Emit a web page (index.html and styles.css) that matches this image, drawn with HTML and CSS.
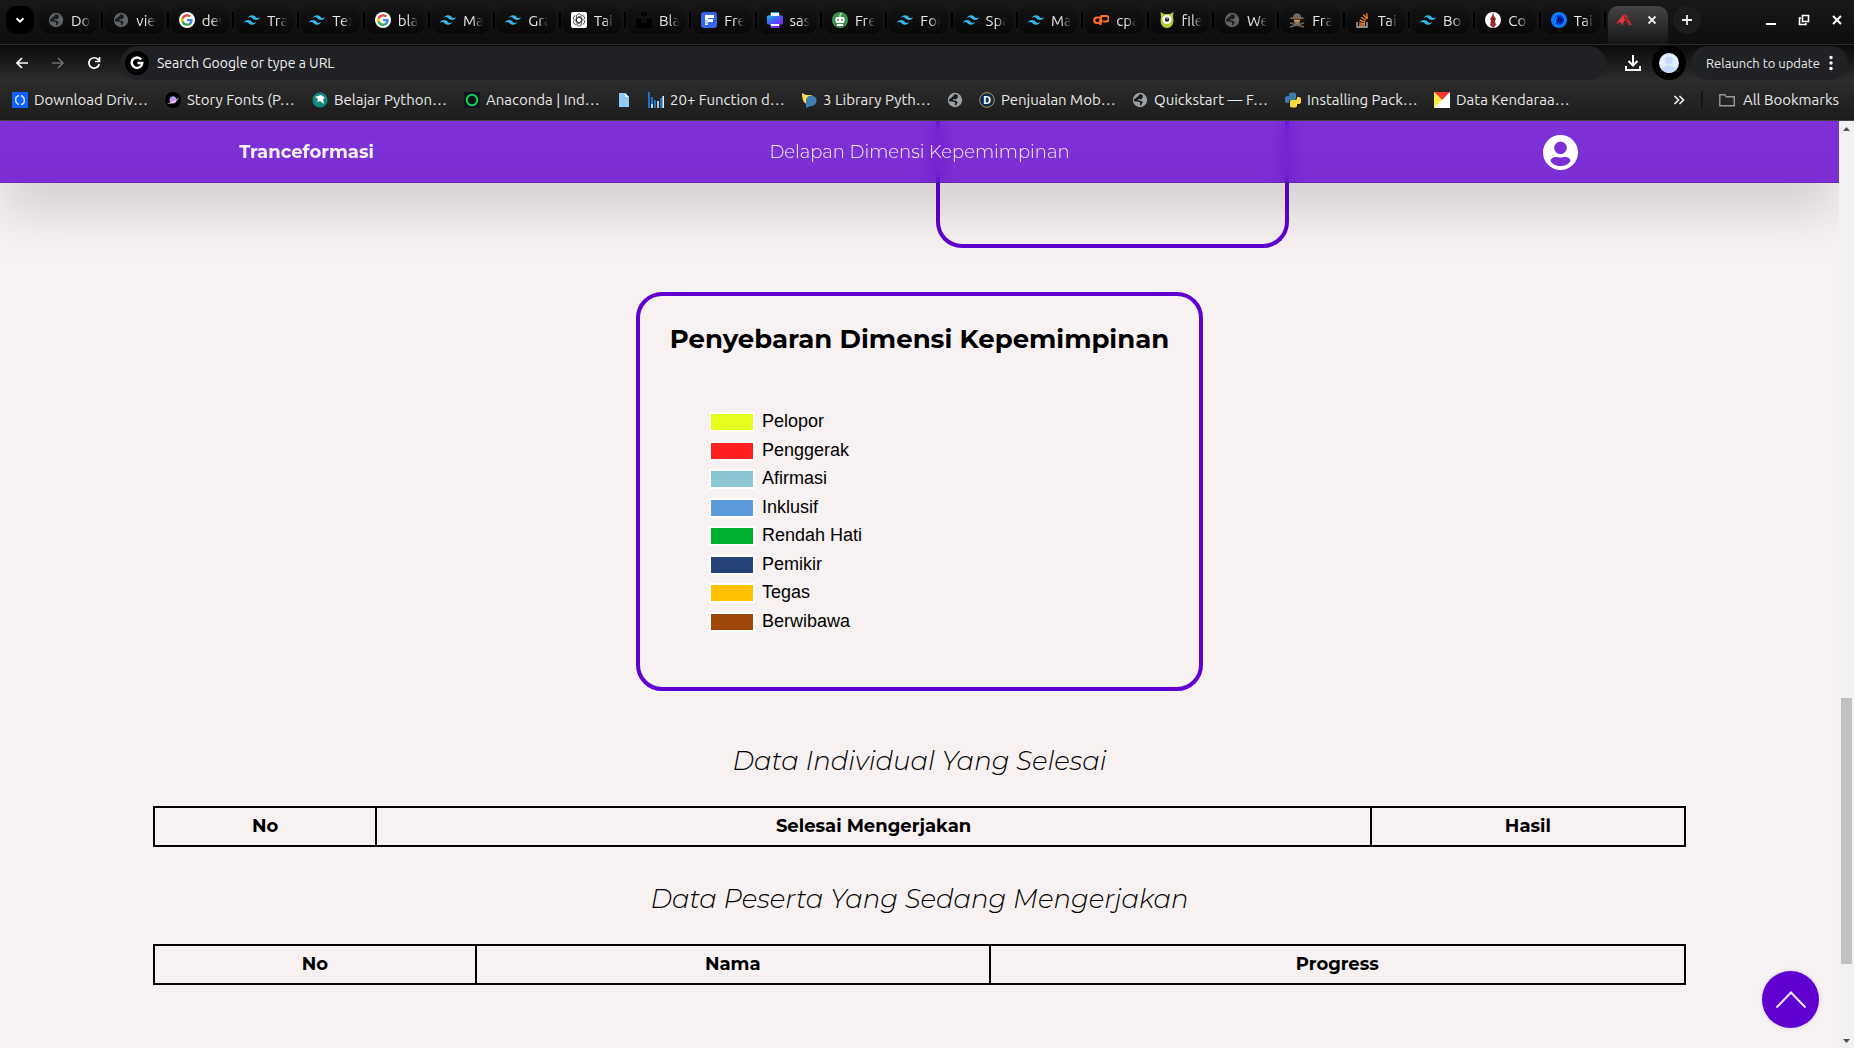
FILE: index.html
```html
<!DOCTYPE html>
<html lang="id">
<head>
<meta charset="utf-8">
<title>Delapan Dimensi Kepemimpinan</title>
<link rel="stylesheet" href="styles.css">
</head>
<body>
<svg class="sprite" aria-hidden="true">
  <symbol id="tailwind" viewBox="0 0 24 24"><path fill="#38b6e8" d="M12 4.800c-3.200 0-5.200 1.600-6 4.800 1.200-1.600 2.600-2.200 4.200-1.800.913.228 1.565.89 2.288 1.624C13.666 10.618 15.027 12 18 12c3.200 0 5.200-1.600 6-4.800-1.200 1.600-2.600 2.200-4.200 1.800-.913-.228-1.565-.89-2.288-1.624C16.337 6.182 14.976 4.800 12 4.800zM6 12c-3.200 0-5.200 1.600-6 4.800 1.200-1.600 2.600-2.200 4.200-1.800.913.228 1.565.89 2.288 1.624 1.177 1.194 2.538 2.576 5.512 2.576 3.200 0 5.200-1.600 6-4.800-1.200 1.600-2.600 2.200-4.200 1.800-.913-.228-1.565-.89-2.288-1.624C10.337 13.382 8.976 12 6 12z"/></symbol>
  <symbol id="globe" viewBox="0 0 16 16"><circle cx="8" cy="8" r="7.200" fill="currentColor"/><path fill="#1b1b1b" d="M7.500 2.200c-1.500.8-.2 2-1.800 2.400C4.200 5 4.500 6.500 3 6.800c-.7.200-1 .8-1.100 1.600.8 2 2.300.6 3.500 1.200 1 .5 1.800.2 2.600 1.100.6.800-.4 1.600-.2 2.600l1 .2c1-.8.700-2 2-2.700-.6-1.200-1-2-2.600-2-.8 0-1.400-.5-2.200-.7 0-1 .8-1.200 1.700-1.100.5.600 1.200.8 1.600.1.300-.6.500-1.100 1.300-1.200.7-.8-.3-1.600.3-2.600-1-.7-2.200-1.100-3.400-1.100z"/></symbol>
  <symbol id="google" viewBox="0 0 24 24"><circle cx="12" cy="12" r="12" fill="#fff"/><g transform="translate(2.400 2.400) scale(.8)"><path fill="#4285f4" d="M22.560 12.250c0-.78-.07-1.530-.2-2.250H12v4.260h5.920c-.26 1.370-1.040 2.530-2.210 3.310v2.770h3.570c2.080-1.920 3.280-4.740 3.280-8.090z"/><path fill="#34a853" d="M12 23c2.970 0 5.460-.98 7.280-2.660l-3.570-2.770c-.98.66-2.230 1.060-3.710 1.060-2.860 0-5.290-1.930-6.160-4.530H2.180v2.840C3.990 20.530 7.700 23 12 23z"/><path fill="#fbbc05" d="M5.840 14.090c-.22-.66-.35-1.360-.35-2.090s.13-1.430.35-2.090V7.070H2.180C1.430 8.550 1 10.220 1 12s.43 3.450 1.180 4.930l3.660-2.840z"/><path fill="#ea4335" d="M12 5.380c1.620 0 3.060.56 4.210 1.640l3.150-3.150C17.450 2.090 14.970 1 12 1 7.700 1 3.990 3.470 2.180 7.070l3.660 2.840c.87-2.600 3.300-4.530 6.160-4.530z"/></g></symbol>
</svg>

<header class="browser">
  <div class="tabstrip">
    <button class="tab-search" aria-label="Search tabs"><svg viewBox="0 0 16 16"><path d="M4.500 6.200 8 9.700l3.500-3.500" fill="none" stroke="#fff" stroke-width="2"/></svg></button>
    <div class="tabs">
      <button class="tab"><svg class="fav dim"><use href="#globe"/></svg><span>Do</span></button>
      <button class="tab"><svg class="fav dim"><use href="#globe"/></svg><span>vie</span></button>
      <button class="tab"><svg class="fav"><use href="#google"/></svg><span>dev</span></button>
      <button class="tab"><svg class="fav"><use href="#tailwind"/></svg><span>Tra</span></button>
      <button class="tab"><svg class="fav"><use href="#tailwind"/></svg><span>Tex</span></button>
      <button class="tab"><svg class="fav"><use href="#google"/></svg><span>bla</span></button>
      <button class="tab"><svg class="fav"><use href="#tailwind"/></svg><span>Ma</span></button>
      <button class="tab"><svg class="fav"><use href="#tailwind"/></svg><span>Gra</span></button>
      <button class="tab"><svg class="fav" viewBox="0 0 16 16"><rect width="16" height="16" rx="2" fill="#fff"/><g fill="none" stroke="#333" stroke-width=".8"><path id="petal" d="M8 5.200 5.500 6.600v4.200M5.500 6.600V4.200A2.400 2.400 0 0 1 9.800 2.800"/><use href="#petal" transform="rotate(60 8 8)"/><use href="#petal" transform="rotate(120 8 8)"/><use href="#petal" transform="rotate(180 8 8)"/><use href="#petal" transform="rotate(240 8 8)"/><use href="#petal" transform="rotate(300 8 8)"/></g></svg><span>Tai</span></button>
      <button class="tab"><svg class="fav" viewBox="0 0 16 16"><path d="M5 0h6v4H5zM0 7h5v4h6V7h5v9H0z" fill="#000"/></svg><span>Bla</span></button>
      <button class="tab"><svg class="fav" viewBox="0 0 16 16"><rect width="16" height="16" rx="3" fill="#3467e8"/><path d="M4 3h9v3H7v1h5v3H7v3H4z" fill="#fff"/><path d="M4 9h3M4 11h3" stroke="#3467e8" stroke-width=".6"/></svg><span>Fre</span></button>
      <button class="tab"><svg class="fav" viewBox="0 0 16 16"><defs><linearGradient id="pr" x1="0" y1="0" x2=".6" y2="1"><stop offset="0" stop-color="#0ff0d0"/><stop offset=".5" stop-color="#3a6bf0"/><stop offset="1" stop-color="#8a1cf0"/></linearGradient></defs><path d="M4 0h8l1 3 3 1v8l-3 1-1 3H4l-1-3-3-1V4l3-1z" fill="url(#pr)"/><path d="M4 1h8v3H4zM4 12h8v2H4z" fill="#fff"/></svg><span>sas</span></button>
      <button class="tab"><svg class="fav" viewBox="0 0 16 16"><circle cx="8" cy="8" r="8" fill="#3e9450"/><path d="M8 5V2.500L10 1" stroke="#fff" fill="none"/><rect x="3.500" y="5" width="9" height="6" rx="2" fill="#fff"/><path d="M5 12h6v2H5z" fill="#fff"/><circle cx="6" cy="8" r="1" fill="#3e9450"/><circle cx="10" cy="8" r="1" fill="#3e9450"/></svg><span>Fre</span></button>
      <button class="tab"><svg class="fav"><use href="#tailwind"/></svg><span>For</span></button>
      <button class="tab"><svg class="fav"><use href="#tailwind"/></svg><span>Spa</span></button>
      <button class="tab"><svg class="fav"><use href="#tailwind"/></svg><span>Ma</span></button>
      <button class="tab"><svg class="fav" viewBox="0 0 16 16"><path d="M7 5.500H4a2.700 2.700 0 0 0 0 5.500h2.500L8.500 4H13a2.700 2.700 0 0 1 0 5.500h-3M8.800 7.500 7.200 13" fill="none" stroke="#ff6c2c" stroke-width="2.200"/></svg><span>cpa</span></button>
      <button class="tab"><svg class="fav" viewBox="0 0 16 16"><path d="M1.500 0l3.500 2h6l3.500-2-.5 5c1.500 6-1 11-6 11S.5 11 2 5z" fill="#b5cc3a"/><circle cx="8" cy="7.500" r="4.500" fill="#fff"/><circle cx="8" cy="7.500" r="2.200" fill="#222"/><circle cx="8" cy="6.500" r=".7" fill="#fff"/></svg><span>file</span></button>
      <button class="tab"><svg class="fav dim"><use href="#globe"/></svg><span>We</span></button>
      <button class="tab"><svg class="fav" viewBox="0 0 16 16"><path d="M4 5c0-5 8-5 8 0l4 1c-3 2-13 2-16 0z" fill="#75655a"/><path d="M5 8h6v3l-2 1H7l-2-1z" fill="#8b7464"/><path d="M5 8h6v1H9l-1 1-1-1H5z" fill="#ff9d1e"/><path d="M1 11l14 4M15 11 1 15" stroke="#75655a" stroke-width="1.500"/></svg><span>Fra</span></button>
      <button class="tab"><svg class="fav" viewBox="0 0 16 16"><path d="M2 10v5h10v-5" fill="none" stroke="#bcbbbb" stroke-width="1.300"/><path d="M4 13h6M4 10.800l6 .7M4.600 8.200l5.600 1.700M6 5.200l5 3M8.300 2.500l3.700 4.500M11.500 1l1 5.600" stroke="#f48024" stroke-width="1.300"/></svg><span>Tai</span></button>
      <button class="tab"><svg class="fav"><use href="#tailwind"/></svg><span>Bo</span></button>
      <button class="tab"><svg class="fav" viewBox="0 0 16 16"><circle cx="8" cy="8" r="8" fill="#fff"/><path d="M8 0l1 4 2 3-1 2 1 4-3 3-3-3 1-4-1-2 2-3z" fill="#a32b2d"/><path d="M7 6l2 1-2 2 2 2" stroke="#612" fill="none"/></svg><span>Co</span></button>
      <button class="tab"><svg class="fav" viewBox="0 0 16 16"><circle cx="8" cy="8" r="8" fill="#0b7dff"/><circle cx="8" cy="8" r="5" fill="#0a37d8"/><path d="M7 4l6 4-5 4 1-3-3 2z" fill="#051a80"/><path d="M5 11a4 4 0 0 1 1-6" stroke="#24b5ff" fill="none"/></svg><span>Tai</span></button>
    </div>
    <button class="tab-active" aria-label="Close tab">
      <svg class="fav" viewBox="0 0 16 16"><path d="M0 12 6.500 3.500 10 2 7.500 6.500 10 7.500 8 9 6.500 13.500 4.500 10z" fill="#f0323c"/><path d="M7 3.500 10.500 2l2 4-2 1.500-2-2zM9.500 8.500 12.500 7l3.500 6-3 .5z" fill="#b02830"/></svg>
      <svg class="close" viewBox="0 0 10 10"><path d="m1.500 1.500 7 7m0-7-7 7" stroke="#eee" stroke-width="1.800"/></svg>
    </button>
    <button class="tab-new" aria-label="New tab"><svg viewBox="0 0 12 12"><path d="M6 1v10M1 6h10" stroke="#eee" stroke-width="1.800"/></svg></button>
    <div class="window-buttons">
      <button aria-label="Minimize"><svg viewBox="0 0 12 12"><path d="M1 10h10" stroke="#fff" stroke-width="2"/></svg></button>
      <button aria-label="Restore"><svg viewBox="0 0 12 12"><path d="M4.500 1.500h6v6h-6zM3 4H1.500v6.500H8V9" fill="none" stroke="#fff" stroke-width="1.600"/></svg></button>
      <button aria-label="Close window"><svg viewBox="0 0 12 12"><path d="m2 2 8 8m0-8-8 8" stroke="#fff" stroke-width="2"/></svg></button>
    </div>
  </div>

  <div class="toolbar">
    <div class="history">
      <button aria-label="Back"><svg viewBox="0 0 14 14"><path d="M13 7H2m5-5L2 7l5 5" fill="none" stroke="#fff" stroke-width="1.700"/></svg></button>
      <button aria-label="Forward"><svg viewBox="0 0 14 14"><path d="M1 7h11M7 2l5 5-5 5" fill="none" stroke="#6d6d6d" stroke-width="1.700"/></svg></button>
      <button aria-label="Reload"><svg viewBox="0 0 14 14"><path d="M12.200 8A5.200 5.200 0 1 1 11 3.500L12.500 5M12.500 1v4.500H8" fill="none" stroke="#fff" stroke-width="1.700"/></svg></button>
    </div>
    <div class="omnibox">
      <span class="engine"><svg viewBox="0 0 16 16"><path d="M12.800 4A6 6 0 1 0 14 8H8.500" fill="none" stroke="#fff" stroke-width="2.800"/></svg></span>
      <input type="text" aria-label="Address and search bar" placeholder="Search Google or type a URL">
    </div>
    <button class="download" aria-label="Downloads"><svg viewBox="0 0 16 16"><path d="M8 0v10M3.500 6 8 10.500 12.500 6M1 11v4h14v-4" fill="none" stroke="#fff" stroke-width="2"/></svg></button>
    <button class="profile" aria-label="Profile"><svg viewBox="0 0 20 20"><circle cx="10" cy="10" r="10" fill="#e3edfd"/><circle cx="10" cy="7.500" r="4" fill="#c6dafc"/><path d="M2.500 16.500c3-5 12-5 15 0a10 10 0 0 1-15 0z" fill="#c6dafc"/></svg></button>
    <button class="relaunch"><span>Relaunch to update</span><svg viewBox="0 0 4 16"><circle cx="2" cy="2.500" r="1.700"/><circle cx="2" cy="8" r="1.700"/><circle cx="2" cy="13.500" r="1.700"/></svg></button>
  </div>

  <nav class="bookmarks" aria-label="Bookmarks">
    <div class="bookmark-list">
      <a href="#"><svg class="fav" viewBox="0 0 16 16"><path d="M0 0h16v16H0z" fill="#0f62fe"/><path d="M7 3.500c-4.500 1-4.500 7 0 9M9 3.500c4.500 2 4.500 8 0 9" stroke="#d6e4ff" stroke-width="1.400" fill="none"/></svg>Download Driv…</a>
      <a href="#"><svg class="fav" viewBox="0 0 16 16"><circle cx="8" cy="8" r="8" fill="#000"/><circle cx="8" cy="8" r="3.500" fill="#d58cf0"/><path d="M2 11c3 0 9-2 12-6-1 4-8 8-12 6z" fill="#f4f4f4"/><path d="M5 6.500a3.500 3.500 0 0 1 5-1.500z" fill="#65d8f4"/></svg>Story Fonts (P…</a>
      <a href="#"><svg class="fav" viewBox="0 0 16 16"><circle cx="8" cy="8" r="7.500" fill="#128a84"/><path d="m3 5 6-2 4 3-2 1 1 5-4-3-3 1 1-3z" fill="#fff"/></svg>Belajar Python…</a>
      <a href="#"><svg class="fav" viewBox="0 0 16 16"><path d="M0 0h16v16H0z" fill="#0c1620"/><circle cx="8" cy="8" r="5.300" fill="none" stroke="#18c850" stroke-width="2"/></svg>Anaconda | Ind…</a>
      <a href="#" aria-label="File"><svg class="fav" viewBox="0 0 16 16"><path d="M3 1h6l4 4v10H3z" fill="#90caee"/><path d="M9 1v4h4z" fill="#e2f4ff"/></svg></a>
      <a href="#"><svg class="fav" viewBox="0 0 16 16"><path d="M1 0v16M4 5v11M7 8v8M13 6v10" stroke="#1976c8" stroke-width="2"/><path d="M10 9v7M15.200 4v12M4 12v4" stroke="#e4f0fa" stroke-width="1.600"/></svg>20+ Function d…</a>
      <a href="#"><svg class="fav" viewBox="0 0 16 16"><path d="M1 1l4 2h6v5l-5 4C2 11 1 6 1 1z" fill="#ffdc52"/><path d="M5 16V8a5.300 5.300 0 1 1 5 6z" fill="#3f7fb5"/></svg>3 Library Pyth…</a>
      <a href="#" aria-label="Site"><svg class="fav light"><use href="#globe"/></svg></a>
      <a href="#"><svg class="fav" viewBox="0 0 16 16"><circle cx="8" cy="8" r="7.300" fill="#0b2b4c" stroke="#b39a5c"/><text x="8" y="12" text-anchor="middle" class="fav-letter">D</text></svg>Penjualan Mob…</a>
      <a href="#"><svg class="fav light"><use href="#globe"/></svg>Quickstart — F…</a>
      <a href="#"><svg class="fav" viewBox="0 0 16 16"><path d="M4 4V2c0-2 7-2 7 0v4c0 2-1 2-2 2H6c-2 0-2 1-2 3H2c-3 0-3-7 0-7h6z" fill="#3d7ab0"/><path d="M12 12v2c0 2-7 2-7 0v-4c0-2 1-2 2-2h3c2 0 2-1 2-3h2c3 0 3 7 0 7H8z" fill="#ffd843"/></svg>Installing Pack…</a>
      <a href="#"><svg class="fav" viewBox="0 0 16 16"><path d="M0 0h16v16H0z" fill="#fff"/><path d="M0 0h16L8 8z" fill="#ee3b2e"/><path d="m0 0 8 8-8 8z" fill="#ffeb3b"/></svg>Data Kendaraa…</a>
    </div>
    <button class="more" aria-label="More bookmarks"><svg viewBox="0 0 12 12"><path d="m1.500 2 4 4-4 4m5-8 4 4-4 4" fill="none" stroke="#eee" stroke-width="1.700"/></svg></button>
    <a class="all" href="#"><svg class="fav" viewBox="0 0 16 16"><path d="M.8 2.800h5l1.500 2h8v9H.8z" fill="none" stroke="#999" stroke-width="1.400"/></svg>All Bookmarks</a>
  </nav>
</header>

<div class="viewport">
  <main class="page">
    <nav class="navbar">
      <a class="brand" href="#">Tranceformasi</a>
      <a class="nav-title" href="#">Delapan Dimensi Kepemimpinan</a>
      <button class="account" aria-label="Akun"><svg viewBox="0 0 35 35"><path fill="#fff" fill-rule="evenodd" d="M17.500 0a17.500 17.500 0 1 0 0 35 17.500 17.500 0 0 0 0-35zm0 6.600a6.300 6.300 0 1 1 0 12.600 6.300 6.300 0 0 1 0-12.600zM7.500 26c0-2.500 3-4 5.500-4 1.500 0 2.500.6 4.500.6s3-.6 4.500-.6c2.500 0 5.500 1.500 5.500 4-1.500 3-5.500 5-10 5s-8.500-2-10-5z"/></svg></button>
    </nav>

    <div class="content">
      <div class="card card-previous"></div>

      <section class="card card-chart">
        <h2>Penyebaran Dimensi Kepemimpinan</h2>
        <ul class="legend">
          <li><i class="swatch pelopor"></i>Pelopor</li>
          <li><i class="swatch penggerak"></i>Penggerak</li>
          <li><i class="swatch afirmasi"></i>Afirmasi</li>
          <li><i class="swatch inklusif"></i>Inklusif</li>
          <li><i class="swatch rendah-hati"></i>Rendah Hati</li>
          <li><i class="swatch pemikir"></i>Pemikir</li>
          <li><i class="swatch tegas"></i>Tegas</li>
          <li><i class="swatch berwibawa"></i>Berwibawa</li>
        </ul>
      </section>

      <section class="data">
        <h2 id="selesai">Data Individual Yang Selesai</h2>
        <table class="finished" aria-labelledby="selesai">
          <thead><tr><th scope="col">No</th><th scope="col">Selesai Mengerjakan</th><th scope="col">Hasil</th></tr></thead>
        </table>
      </section>

      <section class="data">
        <h2 id="sedang">Data Peserta Yang Sedang Mengerjakan</h2>
        <table class="ongoing" aria-labelledby="sedang">
          <thead><tr><th scope="col">No</th><th scope="col">Nama</th><th scope="col">Progress</th></tr></thead>
        </table>
      </section>
    </div>

    <button class="to-top" aria-label="Kembali ke atas"><svg viewBox="0 0 32 18"><path d="M1.500 16.500 16 1.500l14.500 15" fill="none" stroke="#efe6fb" stroke-width="2"/></svg></button>
  </main>

  <div class="scrollbar" aria-hidden="true">
    <svg viewBox="0 0 15 15"><path d="M4 10h7L7.500 6z" fill="#505050"/></svg>
    <div class="track"><div class="thumb"></div></div>
    <svg viewBox="0 0 15 15"><path d="M4 6h7l-3.500 4z" fill="#505050"/></svg>
  </div>
</div>
</body>
</html>
```
FILE: styles.css
```css
* { box-sizing: border-box; }

body {
  margin: 0;
  height: 100vh;
  display: flex;
  flex-direction: column;
  overflow: hidden;
  background: #f7f1f1;
  color: #000;
  font-family: Montserrat, Inter, sans-serif;
}

button { border: 0; padding: 0; background: none; color: inherit; font: inherit; }
a { color: inherit; text-decoration: none; }
svg { display: block; }
h2 { margin: 0; }
.sprite { position: absolute; width: 0; height: 0; }
.fav { width: 16px; height: 16px; flex: none; }
.fav.dim { color: #5f6368; }
.fav.light { color: #9aa0a6; }
.fav-letter { font: bold 11px "Open Sans", sans-serif; fill: #fff; }

/* Browser frame */
.browser {
  flex: none;
  color: #e8e8e8;
  font: 15px Ubuntu, "Noto Sans", "Open Sans", sans-serif;
  border-bottom: 1px solid #454545;
}

.tabstrip {
  display: flex;
  align-items: flex-start;
  height: 45px;
  padding: 6px 7px 0 6px;
  background: linear-gradient(#181818, #0e0e0e);
  border-bottom: 1px solid #2a2a2a;
}

.tab-search {
  width: 28px;
  height: 28px;
  margin-right: 4px;
  padding: 6px;
  border-radius: 10px;
  background: #000;
}

.tabs { flex: 1; display: flex; min-width: 0; }

.tab {
  flex: 1;
  min-width: 0;
  position: relative;
  display: flex;
  align-items: center;
  gap: 7px;
  height: 28px;
  margin-left: 1px;
  padding-left: 9px;
  text-align: left;
}

.tab::before {
  content: "";
  position: absolute;
  inset: 0 5px 0 0;
  z-index: 0;
  border-radius: 10px;
  background: linear-gradient(#141414, #080808);
}

.tab::after {
  content: "";
  position: absolute;
  right: 0;
  top: 6px;
  width: 2px;
  height: 16px;
  background: #000;
}

.tab svg, .tab span { position: relative; z-index: 1; }

.tab span {
  width: 20px;
  overflow: hidden;
  white-space: nowrap;
  -webkit-mask-image: linear-gradient(90deg, #000 50%, transparent);
  mask-image: linear-gradient(90deg, #000 50%, transparent);
}

.tab-active {
  display: flex;
  align-items: center;
  justify-content: space-between;
  width: 60px;
  height: 38px;
  margin-left: 2px;
  padding: 0 11px 10px 8px;
  border-radius: 10px 10px 0 0;
  background: linear-gradient(#444, #161616);
}

.close { width: 10px; height: 10px; }

.tab-new {
  width: 28px;
  height: 28px;
  margin-left: 5px;
  padding: 8px;
  border-radius: 50%;
  background: #1c1c1c;
}

.window-buttons {
  display: flex;
  justify-content: space-between;
  align-items: center;
  width: 78px;
  height: 28px;
  margin: 0 4px 0 64px;
}

.window-buttons svg { width: 12px; height: 12px; }

.toolbar {
  display: flex;
  align-items: center;
  height: 36px;
  padding: 0 6px 0 15px;
  background: linear-gradient(#0b0b0b, #2c2c2c);
}

.history { display: flex; gap: 22px; margin-right: 20px; }
.history svg { width: 14px; height: 14px; }

.omnibox {
  flex: 1;
  display: flex;
  align-items: center;
  gap: 8px;
  height: 34px;
  padding: 0 4px;
  border-radius: 17px;
  background: #202124;
}

.engine {
  flex: none;
  width: 24px;
  height: 24px;
  padding: 5px;
  border-radius: 50%;
  background: #000;
}

.omnibox input {
  flex: 1;
  min-width: 0;
  border: 0;
  padding: 0;
  outline: 0;
  background: none;
  color: #fff;
  font: inherit;
  font-size: 14px;
}

.omnibox input::placeholder { color: #f0f0f0; opacity: 1; }

.download { width: 16px; height: 16px; margin-left: 19px; }

.profile {
  width: 34px;
  height: 34px;
  margin-left: 11px;
  padding: 7px;
  border-radius: 50%;
  background: #000;
}

.relaunch {
  display: flex;
  align-items: center;
  justify-content: space-between;
  width: 157px;
  height: 34px;
  margin-left: 5px;
  padding: 0 15px;
  border-radius: 17px;
  background: #202124;
  font-size: 13px;
}

.relaunch svg { width: 4px; height: 16px; fill: #fff; }

.bookmarks {
  display: flex;
  align-items: center;
  height: 39px;
  padding: 0 15px 2px 12px;
  background: linear-gradient(#2c2c2c, #1c1c1c);
}

.bookmark-list {
  flex: 1;
  display: grid;
  grid-template-columns: 153px 147px 152px 152px 32px 153px 146px 32px 153px 153px 149px 153px;
}

.bookmarks a { display: flex; align-items: center; gap: 6px; white-space: nowrap; }
.more { width: 12px; height: 12px; }
.more svg { width: 12px; height: 12px; }
.bookmarks .all { gap: 8px; margin-left: 16px; padding: 0 0 0 16px; border-left: 2px solid #151515; }

/* Page */
.viewport { flex: 1; min-height: 0; display: flex; }
.page { flex: 1; min-width: 0; position: relative; overflow: hidden; }

.navbar {
  position: relative;
  z-index: 2;
  display: grid;
  grid-template-columns: repeat(3, 1fr);
  align-items: center;
  justify-items: center;
  height: 62px;
  background: linear-gradient(rgba(96, 0, 208, .8), rgba(93, 0, 201, .81));
  backdrop-filter: blur(8px);
  box-shadow: 0 27px 55px rgba(0, 0, 0, .15), inset 0 -1px rgba(0, 0, 0, .12);
  color: #f7f1f1;
  font-size: 18px;
}

.brand { font-weight: 700; }
.nav-title { font-weight: 300; }
.account { width: 35px; height: 35px; margin-left: 56px; }

.content {
  display: flex;
  flex-direction: column;
  align-items: center;
  margin-top: -62px;
}

.card { border: 4px solid #6000d0; border-radius: 26px; }

.card-previous {
  width: 353px;
  height: 127px;
  margin-left: 386px;
  border-top: 0;
  border-radius: 0 0 26px 26px;
}

.card-chart {
  width: 567px;
  height: 399px;
  margin-top: 44px;
  padding-top: 25px;
}

.card-chart h2 {
  font-size: 26px;
  line-height: 36px;
  font-weight: 700;
  text-align: center;
  white-space: nowrap;
}

.legend {
  display: flex;
  flex-direction: column;
  justify-content: space-between;
  height: 220px;
  margin: 55px 0 0 69px;
  padding: 0;
  list-style: none;
  font: 18px/18px "Liberation Sans", Arial, sans-serif;
}

.legend li { display: flex; gap: 7px; height: 20px; }
.swatch { width: 46px; height: 20px; border: 2px solid #fff; }
.pelopor { background: #e7ff1f; }
.penggerak { background: #ff1f1f; }
.afirmasi { background: #8cc6d4; }
.inklusif { background: #5b9ad8; }
.rendah-hati { background: #00b030; }
.pemikir { background: #264478; }
.tegas { background: #ffc000; }
.berwibawa { background: #9e480c; }

.data { width: 83.333%; margin-top: 50px; }
.data + .data { margin-top: 32px; }

.data h2 {
  margin-bottom: 25px;
  font-size: 26px;
  line-height: 40px;
  font-style: italic;
  font-weight: 300;
  text-align: center;
}

table { width: 100%; table-layout: fixed; border-collapse: collapse; }

th {
  height: 39px;
  padding: 0 8px 2px;
  border: 2px solid #000;
  font-size: 18px;
  line-height: 28px;
  font-weight: 700;
}

.finished th:first-child { width: 14.5%; }
.finished th:last-child { width: 20.5%; }
.ongoing th:first-child { width: 21%; }
.ongoing th:last-child { width: 45.4%; }

.to-top {
  position: absolute;
  right: 20px;
  bottom: 20px;
  width: 57px;
  height: 57px;
  padding: 0 12px 0 13px;
  border-radius: 50%;
  background: #6000d0;
  box-shadow: 0 0 3px 1px #d9d9e8;
}

.to-top svg { width: 32px; height: 18px; }

.scrollbar { flex: none; width: 15px; display: flex; flex-direction: column; background: #f1f1f1; }
.scrollbar svg { width: 15px; height: 15px; }
.track { flex: 1; padding: 0 2px; display: flex; flex-direction: column; justify-content: flex-end; }
.thumb { height: 266px; margin-bottom: 69px; background: #c1c1c1; }
```
